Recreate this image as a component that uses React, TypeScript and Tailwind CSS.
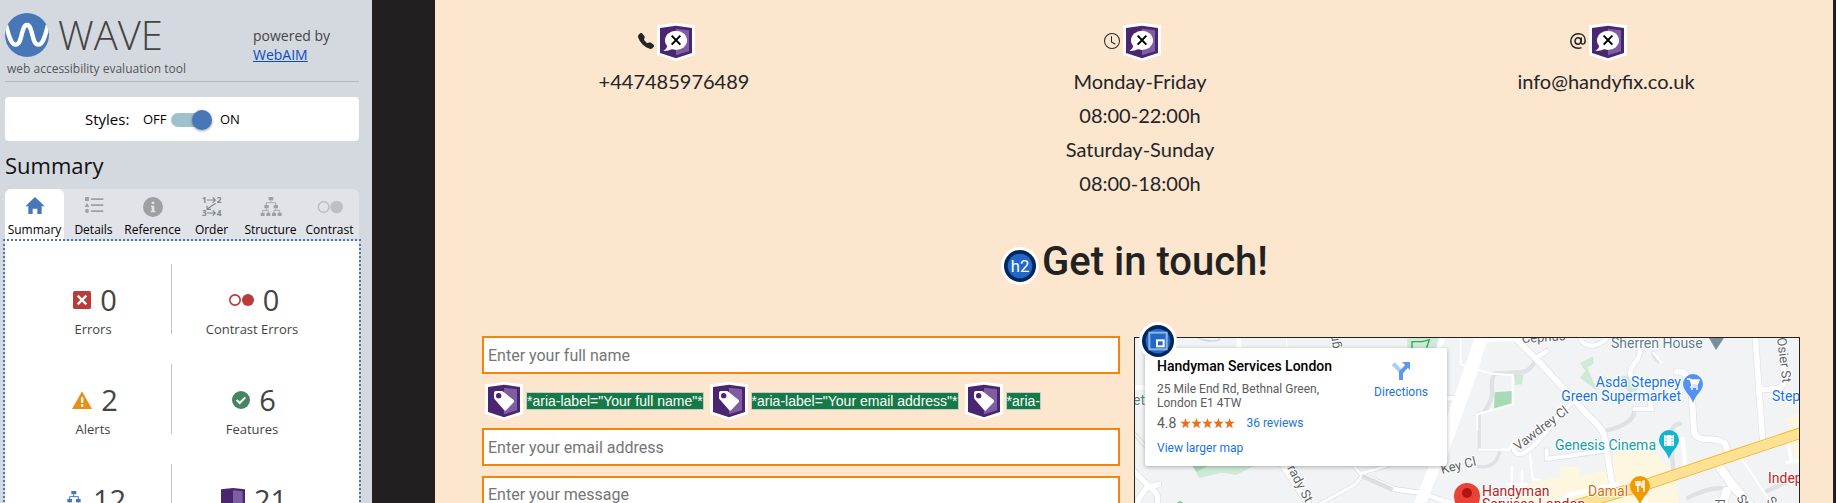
import type { ReactNode } from "react";
import { BsAt, BsClock, BsTelephoneFill } from "react-icons/bs";

/* ---------- WAVE icons ---------- */

function CubeBadge({ children, label }: { children?: ReactNode; label: string }) {
  return (
    <svg viewBox="0 0 114 114" className="h-[38px] w-[38px] shrink-0" role="img" aria-label={label}>
      <path d="M0 7 57 0l57 7v89l-57 18L0 96Z" fill="#fff" />
      <path d="M9 15 57 8l48 7v75l-48 16L9 90Z" fill="#4a2670" />
      <path d="m57 17 39 5v63L57 97Z" fill="#7f5da2" />
      {children}
    </svg>
  );
}

function HiddenBadge() {
  return (
    <CubeBadge label="ARIA hidden">
      <ellipse cx="57" cy="52" rx="33" ry="29" fill="#fff" />
      <path d="M31 66c0 8-5 14-12 18 14 0 24-3 31-9Z" fill="#fff" />
      <path d="m44 38 26 27M70 38 44 65" stroke="#000" strokeWidth="6" />
    </CubeBadge>
  );
}

function LabelBadge() {
  return (
    <CubeBadge label="ARIA label">
      <path
        d="M33 27h17q3 0 5 2l31 25q3 3 0 7L64 84q-4 4-7 0L29 52q-2-2-2-5V33q0-6 6-6Z"
        fill="#fff"
      />
      <circle cx="41" cy="41" r="8" fill="#4a2670" />
    </CubeBadge>
  );
}

function RoundBadge({ children, label }: { children: ReactNode; label: string }) {
  return (
    <svg viewBox="0 0 114 114" className="h-[38px] w-[38px] shrink-0" role="img" aria-label={label}>
      <circle cx="57" cy="57" r="57" fill="#fff" />
      <circle cx="57" cy="57" r="48" fill="#00265b" />
      <circle cx="57" cy="57" r="37" fill="#2368c9" />
      {children}
    </svg>
  );
}

function Logo() {
  return (
    <svg viewBox="0 0 132 132" className="h-11 w-11" aria-hidden="true">
      <clipPath id="disc">
        <circle cx="66" cy="66" r="66" />
      </clipPath>
      <circle cx="66" cy="66" r="66" fill="#4877b8" />
      <path
        clipPath="url(#disc)"
        d="M3 36C12 72 19 95 32 95S47 76 51 61s7-25 15-25 11 10 15 25 6 34 19 34 20-23 29-59"
        fill="none"
        stroke="#fff"
        strokeWidth="13"
      />
    </svg>
  );
}

const tabs: { name: string; icon: ReactNode }[] = [
  {
    name: "Summary",
    icon: <path d="M33 3 62 31H53V54H40V38H26V54H13V31H4Z" fill="#4877b8" />,
  },
  {
    name: "Details",
    icon: (
      <g fill="#9ea1a4">
        <path d="M6 3h12v12H6zM12 20l7 13H5zM24 7h37v5H24zM24 25h37v5H24zM24 43h37v5H24z" />
        <circle cx="12" cy="45" r="6" />
      </g>
    ),
  },
  {
    name: "Reference",
    icon: (
      <>
        <circle cx="33" cy="33" r="30" fill="#9ea1a4" />
        <path d="M29 17h8v7h-8zM27 29h10v16h3v4H26v-4h3V33h-2z" fill="#e0e3e7" />
      </>
    ),
  },
  {
    name: "Order",
    icon: (
      <g fill="#84878a" fontSize="25" fontWeight="700">
        <text x="3" y="21">1</text>
        <text x="47" y="21">2</text>
        <text x="3" y="60">3</text>
        <text x="47" y="60">4</text>
        <path
          d="M18 12h25M35 4l8 8-8 8M44 22 17 40M18 29v11h12M18 51h25M35 43l8 8-8 8"
          fill="none"
          stroke="#84878a"
          strokeWidth="3.500"
        />
      </g>
    ),
  },
  {
    name: "Structure",
    icon: (
      <g fill="#9ea1a4">
        <path d="M26 3h14v10H26zM13 27h13v10H13zM41 27h13v10H41zM2 50h12v10H2zM19 50h12v10H19zM36 50h12v10H36zM53 50h12v10H53z" />
        <path
          d="M33 13v7M19 27v-7h28v7M19 37v6M8 50v-7h17v7M47 37v6M42 50v-7h17v7"
          fill="none"
          stroke="#9ea1a4"
          strokeWidth="2.500"
        />
      </g>
    ),
  },
  {
    name: "Contrast",
    icon: (
      <>
        <circle cx="14" cy="33" r="16" fill="none" stroke="#bcc0c5" strokeWidth="5" />
        <circle cx="53" cy="33" r="19" fill="#bcc0c5" />
      </>
    ),
  },
];

const stats: { name: string; value: number; icon: ReactNode }[][] = [
  [
    {
      name: "Errors",
      value: 0,
      icon: (
        <svg viewBox="0 0 54 54" className="h-[18px] w-[18px]" aria-hidden="true">
          <rect width="54" height="54" rx="5" fill="#bb3a3a" />
          <path d="m14 14 26 26M40 14 14 40" stroke="#fff" strokeWidth="7" />
        </svg>
      ),
    },
    {
      name: "Contrast Errors",
      value: 0,
      icon: (
        <svg viewBox="0 0 75 54" className="h-[18px] w-[25px]" aria-hidden="true">
          <circle cx="18" cy="27" r="15.500" fill="none" stroke="#bb3a3a" strokeWidth="5" />
          <circle cx="57" cy="27" r="18" fill="#bb3a3a" />
        </svg>
      ),
    },
  ],
  [
    {
      name: "Alerts",
      value: 2,
      icon: (
        <svg viewBox="0 0 60 54" className="h-[18px] w-5" aria-hidden="true">
          <path d="m30 1 30 53H0Z" fill="#e59118" />
          <path d="M27 19h7v16h-7zM27 40h7v7h-7z" fill="#fff" />
        </svg>
      ),
    },
    {
      name: "Features",
      value: 6,
      icon: (
        <svg viewBox="0 0 54 54" className="h-[18px] w-[18px]" aria-hidden="true">
          <circle cx="27" cy="27" r="27" fill="#468564" />
          <path d="m14 27 9 9 17-17" fill="none" stroke="#fff" strokeWidth="6" />
        </svg>
      ),
    },
  ],
  [
    {
      name: "Structural Elements",
      value: 12,
      icon: (
        <svg viewBox="0 0 60 54" className="h-[18px] w-5" aria-hidden="true">
          <path d="M22 0h15v10H22zM10 24h14v10H10zM36 24h14v10H36zM0 45h12v9H0zM17 45h12v9H17zM32 45h12v9H32zM48 45h12v9H48z" fill="#4877b8" />
          <path d="M29 10v8M17 25v-8h26v8M17 34v10M43 34v10" fill="none" stroke="#4877b8" strokeWidth="3" />
        </svg>
      ),
    },
    {
      name: "ARIA",
      value: 21,
      icon: (
        <svg viewBox="0 0 72 72" className="h-6 w-6" aria-hidden="true">
          <path d="M0 4 36 0l36 4v58L36 72 0 62Z" fill="#4a2670" />
          <path d="m36 7 29 3v46l-29 8Z" fill="#7f5da2" />
        </svg>
      ),
    },
  ],
];

function WavePanel() {
  return (
    <aside className="w-[372px] shrink-0 overflow-hidden bg-[#d4d9e0] pr-[13px] pl-[5px] font-['Open_Sans',sans-serif]">
      <header className="flex h-[82px] justify-between border-b border-[#b3b9ba] pt-[13px]">
        <div>
          <div className="flex h-11 items-center gap-[9px]">
            <Logo />
            <span className="text-[40px] leading-[44px] font-light text-[#444]">WAVE</span>
          </div>
          <p className="pl-[2px] text-[12px] leading-6 text-[#555]">
            web accessibility evaluation tool
          </p>
        </div>
        <p className="w-[106px] pt-[13px] text-[14px] leading-[19px] text-[#444]">
          powered by
          <br />
          <a href="#webaim" className="text-[#0a4cc9] underline">
            WebAIM
          </a>
        </p>
      </header>

      <label className="mt-[15px] flex h-11 items-center rounded-[4px] bg-white pt-px pl-20 text-[13px] text-black">
        <span className="w-[58px] text-[15px]">Styles:</span>
        <span className="w-7">OFF</span>
        <input
          type="checkbox"
          role="switch"
          defaultChecked
          className="relative h-5 w-[41px] appearance-none before:absolute before:top-[3px] before:left-0 before:h-[14px] before:w-[34px] before:rounded-full before:bg-[#9fc1cc] after:absolute after:top-0 after:right-0 after:h-5 after:w-5 after:rounded-full after:bg-[#4877b8] after:shadow-[0_1px_3px_rgba(0,0,0,0.4)]"
        />
        <span className="pl-2">ON</span>
      </label>

      <h1 className="mt-2 h-10 text-[22px] leading-8 text-[#111]">Summary</h1>

      <div role="tablist" className="grid h-[52px] grid-cols-6 rounded-t-[6px] bg-[#e0e3e7]">
        {tabs.map((tab, i) => (
          <button
            key={tab.name}
            type="button"
            role="tab"
            aria-selected={i === 0}
            className={
              i === 0
                ? "flex flex-col items-center rounded-t-[6px] bg-white pt-[7px]"
                : "flex flex-col items-center pt-[7px]"
            }
          >
            <svg viewBox="0 0 66 66" className="h-[22px] w-[22px] overflow-visible" aria-hidden="true">
              {tab.icon}
            </svg>
            <span className="text-[12px] leading-6 text-black">{tab.name}</span>
          </button>
        ))}
      </div>

      <div className="relative h-full bg-white pt-[23px] pl-[10px] outline-2 outline-[#4877b8] outline-dotted">
        {stats.map(([left, right]) => (
          <div key={left.name} className="flex h-[100px]">
            <Stat {...left} />
            <div className="h-[70px] w-px bg-[#c4c4c4]" />
            <Stat {...right} />
          </div>
        ))}
      </div>
    </aside>
  );
}

function Stat({ name, value, icon }: { name: string; value: number; icon: ReactNode }) {
  return (
    <div className="w-[160px] pt-5 text-center text-[#444] first:w-[156px]">
      <div className="flex h-8 items-center justify-center gap-[9px] pl-1 text-[29px] leading-8">
        {icon}
        <span>{value}</span>
      </div>
      <div className="pt-[3px] text-[13px] leading-5">{name}</div>
    </div>
  );
}

/* ---------- Evaluated page ---------- */

const contacts = [
  { icon: <BsTelephoneFill />, lines: ["+447485976489"] },
  {
    icon: <BsClock />,
    lines: ["Monday-Friday", "08:00-22:00h", "Saturday-Sunday", "08:00-18:00h"],
  },
  {
    icon: (
      <svg viewBox="-8 -8 16 16" className="h-4 w-4" fill="none" stroke="currentColor" aria-hidden="true">
        <ellipse cx="0" cy="0" rx="3" ry="3.200" strokeWidth="1.500" />
        <path d="M3.300-3.500 3 1.500Q3.200 3.200 5 3.100 7.200 2.500 7.200-.6C7.200-4.800 4.200-7.200.4-7.200-4.200-7.200-7.200-4-7.200.3S-4.200 7.200.3 7.200q1.800 0 3.200-.6" strokeWidth="1.500" />
      </svg>
    ),
    lines: ["info@handyfix.co.uk"],
  },
];

const ariaLabels = ['*aria-label="Your full name"*', '*aria-label="Your email address"*', "*aria-"];

const fieldClass =
  "block h-[38px] w-full rounded-none border-2 border-[#f5840c] bg-white px-1 text-[16px] text-[#222] outline-none placeholder:text-[#757575]";

const road = { fill: "none", stroke: "#fff", strokeLinejoin: "round", strokeLinecap: "round" } as const;

function MapDrawing() {
  return (
    <svg
      viewBox="1135 337 664 400"
      preserveAspectRatio="xMinYMin slice"
      className="block h-[400px] w-full"
      role="img"
      aria-label="Street map of Stepney Green"
    >
      <rect x="1100" y="300" width="900" height="500" fill="#f1f3f4" />

      {/* west half */}
      <g transform="translate(1120 310) scale(.33333)">
        <path d="M862 60h98l-14 60h-84Z" fill="#cfead6" />
        <path d="M876 111V92h32l20-6-8 24" fill="none" stroke="#34a853" strokeWidth="4" />
        <path d="M216 463h190l-56 28-46-6-66 16Z" fill="#ceead6" />
        <path d="M216 463h50l-36 20Z" fill="#a8dab5" />
        <path d="m166 579 14-10 14 10Z" fill="#81c995" />
        <g {...road} stroke="#d5d8db">
          <path d="m30 360 60 70M36 352l70 80" strokeWidth="3" />
          <path d="M210 60c20 26 60 36 88 26V60" strokeWidth="5" />
        </g>
        <g {...road} stroke="#dcdfe2">
          <path d="m30 470 74 72q16 14 4 50M116 520l-36 10-26 36v40" strokeWidth="20" />
          <path d="m460 420 120 180" strokeWidth="22" />
          <path d="m730 494 90 40 86 12 60 22 70 20M980 262h50" strokeWidth="18" />
          <path d="M690 450 726 494 706 520 580 590M726 486l80-23" strokeWidth="13" />
        </g>
        <g {...road}>
          <path d="m30 470 74 72q16 14 4 50M116 520l-36 10-26 36v40" strokeWidth="16" />
          <path d="m460 420 120 180" strokeWidth="18" />
          <path d="M357 60v60M42 230h40" strokeWidth="14" />
          <path d="M120 80h200l180-10h440" strokeWidth="4" />
          <path d="m500 60v60" strokeWidth="4" />
          <path d="M690 450 726 494 706 520 580 590M726 486l80-23" strokeWidth="9" />
          <path d="M1090 60 970 400 895 590" strokeWidth="34" />
          <path d="M975 60 955 120" strokeWidth="14" />
          <path d="m730 494 90 40 86 12 60 22 70 20M980 262h50" strokeWidth="14" />
        </g>
        <path d="m726 494 92 42" stroke="#dcdee0" strokeWidth="13" fill="none" />
      </g>

      {/* east half */}
      <g transform="translate(1440 310) scale(.33333)">
        <path d="m222 188 28 4-4 28-20 2Z" fill="#ceead6" />
        <path d="m164 244 52-4v40l-54 14Z" fill="#a8dab5" />
        <path d="m420 156 40-20v22l-18 12 30 70-52-40 16-20Z" fill="#ceead6" />
        <path d="m544 196 34-6 22 40-30 18-26-34Z" fill="#ceead6" />
        <path d="m240 525 122-29v-28h56v30l100-26 6-84h104l34 60 40 30 20 120H200Z" fill="#fef7e0" />
        <path d="m1040 320 40-12v150h-12Z" fill="#fef7e0" />
        <g {...road} stroke="#dfe1e4">
          <path d="M640 125q0 10 16 26M500 358q80-20 82-54M700 480l-8-110q4-30 28-32M744 560q60-30 100-28" strokeWidth="13" />
          <path d="M290 140q-20 50-60 44l-66 4q-10 10-8 50 4 20-20 60" strokeWidth="13" />
          <path d="M118 306v110h62q-10 60-70 50" strokeWidth="10" />
          <path d="m980 540 90-40" strokeWidth="13" />
          <path d="M230 86 300 156 400 264 450 320q30 24 42 50l28 170" strokeWidth="22" />
          <path d="m290 140 30-20M400 270l-50 50q-70 100-110 110-18 0-20-22" strokeWidth="17" />
          <path d="M420 70q0 36 40 34 30-6 46-30M320 418v26l180-26" strokeWidth="17" />
          <path d="M600 100q4 34-14 54-30 36 0 56 50 50 46 84M584 294h52" strokeWidth="18" />
          <path d="M710 182q30-4 44 40l8 140q4 18 26 22 60 0 68 16l14 44" strokeWidth="22" />
          <path d="m945 60 12 180 12 160M960 236q70 0 70-16V130" strokeWidth="21" />
          <path d="m840 470 36 50 60 70M860 540l-16 50" strokeWidth="30" />
        </g>
        <g {...road}>
          <path d="M130 60 90 190 0 440" strokeWidth="38" />
          <path d="M130 90q60-10 110-4" strokeWidth="14" />
          <path d="M230 86 300 156 400 264 450 320q30 24 42 50l28 170" strokeWidth="18" />
          <path d="m290 140 30-20M400 270l-50 50q-70 100-110 110-18 0-20-22" strokeWidth="13" />
          <path d="M420 70q0 36 40 34 30-6 46-30" strokeWidth="13" />
          <path d="M600 100q4 34-14 54-30 36 0 56 50 50 46 84M584 294h52" strokeWidth="14" />
          <path d="M710 182q30-4 44 40l8 140q4 18 26 22 60 0 68 16l14 44" strokeWidth="18" />
          <path d="m640 125 24 30" strokeWidth="7" />
          <path d="m945 60 12 180 12 160M960 236q70 0 70-16V130" strokeWidth="17" />
          <path d="m728 384 8 90" strokeWidth="13" />
          <path d="m1046 400 8 50-12 4 30-6" strokeWidth="10" />
          <path d="M320 418v26l180-26" strokeWidth="12" />
          <path d="M62 60v100l90 28 66 4v88l-106 30v46" strokeWidth="6" />
          <path d="M118 416h90l10-20M270 430l8 76h20M216 466v60M246 480v60M200 520h60" strokeWidth="7" />
          <path d="M30 590q10-30 80-32" strokeWidth="18" />
          <path d="m840 470 36 50 60 70M860 540l-16 50" strokeWidth="26" />
          <path d="m906 444 80 120" strokeWidth="6" />
          <path d="m330 590 60-40 140-30" strokeWidth="14" />
          <path d="m610 540 16 60" strokeWidth="10" />
        </g>
        <path d="M370 594 620 520 866 438l240-80" fill="none" stroke="#f7b32b" strokeWidth="34" />
        <path d="M370 594 620 520 866 438l240-80" fill="none" stroke="#fde293" strokeWidth="29" />
      </g>

      {/* labels */}
      <g
        fontFamily="Roboto, sans-serif"
        fontSize="12"
        fill="#5f6368"
        stroke="#fff"
        strokeWidth="2"
        strokeLinejoin="round"
        paintOrder="stroke"
      >
        <text transform="translate(1522 342) rotate(-4)" fontSize="13">Cephus</text>
        <text x="1133" y="404" fontSize="14" fill="#607d8b">et</text>
        <text transform="translate(1287 467) rotate(62)" fontSize="13">rady St</text>
        <text transform="translate(1340 347) rotate(-100)" fontSize="13">gr</text>
        <text transform="translate(1518 450) rotate(-37)" fontSize="13">Vawdrey Cl</text>
        <text transform="translate(1442 473) rotate(-14)" fontSize="13">Key Cl</text>
        <text transform="translate(1777 337) rotate(83)" fontSize="13">Osier St</text>
        <text transform="translate(1736 497) rotate(58)" fontSize="13">St</text>
        <text transform="translate(1718 498) rotate(90)" fontSize="13">p</text>
        <text transform="translate(1766 500) rotate(50)" fontSize="13">S</text>
        <g fontSize="14">
          <text x="1611" y="347" fill="#607d8b">Sherren House</text>
          <g fill="#1a73e8">
            <text x="1681" y="386" textAnchor="end">Asda Stepney</text>
            <text x="1681" y="400" textAnchor="end">Green Supermarket</text>
            <text x="1772" y="400">Stepney</text>
          </g>
          <text x="1555" y="449" fill="#129eaf">Genesis Cinema</text>
          <text x="1588" y="495" fill="#d56e0c">Damal</text>
          <text x="1768" y="482" fill="#c5221f">Independent</text>
          <g fill="#b3261e">
            <text x="1482" y="495">Handyman</text>
            <text x="1482" y="508">Services London</text>
          </g>
        </g>
      </g>

      {/* pins */}
      <path d="M1709 337h15l-8 12Z" fill="#78909c" />
      <g transform="translate(1693 383)">
        <path d="M0 19C-2 11-10 7-10 0a10 10 0 0 1 20 0C10 7 2 11 0 19Z" fill="#5491f5" />
        <path d="M-6-5h3l2 6h5l2-5h-8M-1 1l-1 2h7" fill="none" stroke="#fff" strokeWidth="1.500" />
        <path d="M-2-4h8L4 0h-5Z" fill="#fff" />
        <circle cx="-1" cy="5" r="1" fill="#fff" />
        <circle cx="4" cy="5" r="1" fill="#fff" />
      </g>
      <g transform="translate(1669 439)">
        <path d="M0 19C-2 11-10 7-10 0a10 10 0 0 1 20 0C10 7 2 11 0 19Z" fill="#12b5cb" />
        <path d="M-5-5H5V6H-5Z" fill="#fff" />
        <path d="M-3-5V6M3-5V6" stroke="#12b5cb" strokeDasharray="1.500 1.500" />
      </g>
      <g transform="translate(1640 485)">
        <path d="M0 19C-2 11-10 7-10 0a10 10 0 0 1 20 0C10 7 2 11 0 19Z" fill="#f29900" />
        <path d="M-4-5v4h4v-4M-2-5V6M4 6V-5q-2 0-2 4v2h2" fill="none" stroke="#fff" strokeWidth="1.500" />
      </g>
      <path d="M1467 532c-2-18-13-24-13-37a13 13 0 0 1 26 0c0 13-11 19-13 37Z" fill="#ea4335" />
      <circle cx="1467" cy="492" r="5" fill="#b31412" />
    </svg>
  );
}

function PlaceCard() {
  return (
    <div className="absolute top-[10px] left-[10px] flex h-[118px] w-[302px] justify-between rounded-[2px] bg-white pt-[9px] pr-[19px] pl-3 text-[12px] leading-[14px] shadow-[0_1px_4px_rgba(0,0,0,0.3)]">
      <div>
        <h3 className="text-[14px] leading-[18px] font-medium text-black">Handyman Services London</h3>
        <p className="mt-[7px] w-[180px] text-[#5b5b5b]">25 Mile End Rd, Bethnal Green, London E1 4TW</p>
        <p className="mt-[5px] flex h-4 items-center text-[14px] text-[#5b5b5b]">
          4.8
          <svg viewBox="0 0 55 11" className="ml-1 h-[11px] w-[55px]" aria-label="5 stars" role="img">
            {[0, 11, 22, 33, 44].map((x) => (
              <path
                key={x}
                transform={`translate(${x} 0)`}
                d="m5.500 0 1.300 3.800h4L7.600 6.200l1.200 4L5.500 7.900l-3.300 2.300 1.200-4L.2 3.800h4Z"
                fill="#e7711b"
              />
            ))}
          </svg>
          <a href="#reviews" className="ml-[11px] text-[12px] text-[#1a73e8]">
            36 reviews
          </a>
        </p>
        <a href="#map" className="mt-[10px] block text-[#1a73e8]">
          View larger map
        </a>
      </div>
      <a href="#directions" className="flex flex-col items-center pt-[5px] text-[#1a73e8]">
        <svg viewBox="0 0 54 54" className="h-[18px] w-[18px]" aria-hidden="true">
          <path d="m4 5 23 24" stroke="#a9cbf7" strokeWidth="12" />
          <path d="M27 54V31L46 11" fill="none" stroke="#5c9ae8" strokeWidth="12" />
          <path d="M30 0h24v24Z" fill="#5c9ae8" />
        </svg>
        <span className="mt-[5px]">Directions</span>
      </a>
    </div>
  );
}

function ContactPage() {
  return (
    <main className="min-w-0 flex-1 overflow-hidden bg-[#fde6ce] pl-[6px] font-['Roboto',sans-serif] text-[#212529]">
      <div className="-mr-[6px]">
        <div className="grid grid-cols-3 pt-[23px] text-center font-['Lato',sans-serif] text-[20px]">
          {contacts.map((contact) => (
            <div key={contact.lines[0]}>
              <div className="flex h-[41px] items-start justify-center gap-[3px] pr-4">
                <span className="flex h-9 items-center text-[16px]">{contact.icon}</span>
                <HiddenBadge />
              </div>
              {contact.lines.map((line) => (
                <p key={line} className="leading-[34px]">
                  {line}
                </p>
              ))}
            </div>
          ))}
        </div>

        <h2 className="mt-[38px] flex h-12 items-center justify-center gap-[3px] pr-[11px] text-[40px] leading-[48px] font-medium text-[#222]">
          <span className="flex pt-2">
            <RoundBadge label="Heading level 2">
              <text x="57" y="76" textAnchor="middle" fontSize="50" fontWeight="400" fill="#fff">
                h2
              </text>
            </RoundBadge>
          </span>
          Get in touch!
        </h2>

        <div className="grid grid-cols-[638fr_666fr] gap-[14px] pt-[50px] pr-[39px] pl-[41px]">
          <form>
            <input type="text" aria-label="Your full name" placeholder="Enter your full name" className={fieldClass} />
            <div className="flex h-[54px] items-center gap-[6px] pl-[3px] font-['Liberation_Sans',sans-serif] text-[14px] leading-4">
              {ariaLabels.map((text) => (
                <span key={text} className="flex items-center gap-[3px]">
                  <LabelBadge />
                  <span className="border border-[#c3ccc6] bg-[#157a48] text-white">{text}</span>
                </span>
              ))}
            </div>
            <input type="email" aria-label="Your email address" placeholder="Enter your email address" className={fieldClass} />
            <textarea
              aria-label="Your message"
              placeholder="Enter your message"
              className="mt-[10px] block h-[150px] w-full resize-none rounded-none border-2 border-[#f5840c] bg-white px-1 py-[5px] text-[16px] leading-6 text-[#222] outline-none placeholder:text-[#757575]"
            />
          </form>
          <section aria-label="Location" className="relative mt-px self-start border border-[#222]">
            <MapDrawing />
            <PlaceCard />
            <div className="absolute -top-4 left-1">
              <RoundBadge label="Inline frame">
                <rect x="31" y="32" width="52" height="50" fill="none" stroke="#8db4e6" strokeWidth="6" />
                <rect x="54" y="55" width="20" height="18" fill="#2368c9" stroke="#fff" strokeWidth="6" />
              </RoundBadge>
            </div>
          </section>
        </div>
      </div>
    </main>
  );
}

export default function App() {
  return (
    <div className="flex h-screen overflow-hidden bg-[#231f20] pr-[3px]">
      <WavePanel />
      <div className="w-[63px] shrink-0" />
      <ContactPage />
    </div>
  );
}
